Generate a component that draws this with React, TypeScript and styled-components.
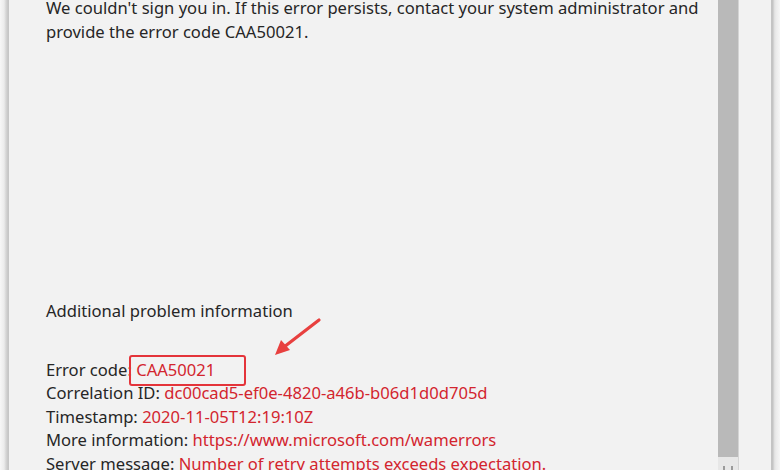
import styled, { createGlobalStyle } from 'styled-components';

const GlobalStyle = createGlobalStyle`
  html, body {
    margin: 0;
    padding: 0;
    background: #ffffff;
  }
  body {
    font-family: "Noto Sans", "Open Sans", sans-serif;
  }
`;

const Frame = styled.div`
  display: flex;
  width: 780px;
  height: 470px;
  overflow: hidden;
`;

const Edge = styled.div<{ side: 'left' | 'right' }>`
  flex: 0 0 9px;
  background: ${({ side }) =>
    side === 'left'
      ? 'linear-gradient(to right, #f7f7f7 0px, #ececec 4px, #d6d6d6 6px, #c6c6c6 8px, #c6c6c6 9px)'
      : 'linear-gradient(to right, #c4c4c4 0px, #c4c4c4 2px, #dedede 3px, #ebebeb 5px, #f6f6f6 9px)'};
`;

const Window = styled.div`
  flex: 1;
  display: flex;
  background: #f2f2f2;
  color: #262626;
`;

const Content = styled.div`
  flex: 1;
  padding-left: 37px;
  font-size: 16.6px;
  line-height: 23.5px;
`;

const Message = styled.p`
  margin: -4px 0 0;
  width: 670px;
`;

const Heading = styled.p`
  margin: 256px 0 0;
`;

const Details = styled.div`
  margin-top: 35px;
  display: flex;
  flex-direction: column;
`;

const Row = styled.div`
  white-space: nowrap;
`;

const Value = styled.span`
  color: #d3252e;
`;

// red annotation frame drawn over the error code
const Highlight = styled.span`
  position: relative;
  &::after {
    content: '';
    position: absolute;
    left: -7px;
    right: -31px;
    top: -3px;
    bottom: -5px;
    border: 2.5px solid #e4343a;
    border-radius: 3px;
  }
`;

const Arrow = styled.svg`
  position: absolute;
  left: 266px;
  top: 312px;
`;

const ScrollTrack = styled.div`
  flex: 0 0 20px;
  margin-right: 32px;
  display: flex;
  flex-direction: column;
  border-right: 1px solid #d4d4d4;
`;

const Thumb = styled.div`
  height: 457px;
  background: #b9b9b9;
`;

const ArrowButton = styled.div`
  flex: 1;
  background: #e7e7e7;
  position: relative;
  &::before,
  &::after {
    content: '';
    position: absolute;
    top: 9px;
    width: 2px;
    height: 5px;
    background: #9a9a9a;
  }
  &::before {
    left: 5px;
  }
  &::after {
    left: 13px;
  }
`;

const Stage = styled.div`
  position: relative;
`;

export default function App() {
  return (
    <Stage>
      <GlobalStyle />
      <Frame>
        <Edge side="left" />
        <Window>
          <Content>
            <Message>
              We couldn't sign you in. If this error persists, contact your system administrator and
              provide the error code CAA50021.
            </Message>
            <Heading>Additional problem information</Heading>
            <Details>
              <Row>
                Error code: <Highlight><Value>CAA50021</Value></Highlight>
              </Row>
              <Row>
                Correlation ID: <Value>dc00cad5-ef0e-4820-a46b-b06d1d0d705d</Value>
              </Row>
              <Row>
                Timestamp: <Value>2020-11-05T12:19:10Z</Value>
              </Row>
              <Row>
                More information: <Value>https://www.microsoft.com/wamerrors</Value>
              </Row>
              <Row>
                Server message: <Value>Number of retry attempts exceeds expectation.</Value>
              </Row>
            </Details>
          </Content>
          <ScrollTrack>
            <Thumb />
            <ArrowButton />
          </ScrollTrack>
        </Window>
        <Edge side="right" />
      </Frame>
      <Arrow width="60" height="50" viewBox="0 0 60 50">
        <line x1="53" y1="8" x2="18" y2="35" stroke="#e8403f" strokeWidth="3.2" strokeLinecap="round" />
        <polygon points="9,43 15,28 24,38" fill="#e8403f" />
      </Arrow>
    </Stage>
  );
}
